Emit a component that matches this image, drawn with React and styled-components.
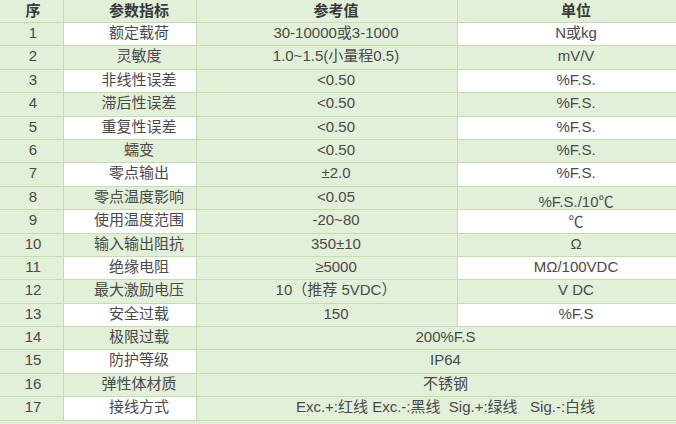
import React from "react"
import styled, { createGlobalStyle } from "styled-components"

const GlobalStyle = createGlobalStyle`
    html, body {
        margin: 0;
        padding: 0;
        background: #e2efd9;
    }
    body {
        font-family: "Liberation Sans", "Noto Sans CJK SC", sans-serif;
    }
`

const Sheet = styled.div`
    display: grid;
    width: 676px;
    grid-template-columns: 63px 132px 260px 218px;
    grid-template-rows: 22px repeat(17, 22.4px);
    gap: 1px;
    background: #c4dcb0;
    border-bottom: 1px solid #c4dcb0;
`

const Cell = styled.div`
    display: flex;
    justify-content: center;
    align-items: flex-start;
    grid-column: ${props => props.span ? `span ${props.span}` : "auto"};
    padding: ${props => 1 + (props.drop || 0)}px 0 0 ${props => props.first ? 3 : 18}px;
    background: ${props => props.light ? "#ffffff" : "#e2efd9"};
    color: #4a4a4a;
    font-size: 15px;
    line-height: 18px;
    white-space: pre;
    overflow: hidden;
`

const HeadCell = styled(Cell)`
    padding-top: 2px;
    font-weight: bold;
    color: #3a3a3a;
`

const rows = [
    ["1", "额定载荷", "30-10000或3-1000", "N或kg"],
    ["2", "灵敏度", "1.0~1.5(小量程0.5)", "mV/V"],
    ["3", "非线性误差", "<0.50", "%F.S."],
    ["4", "滞后性误差", "<0.50", "%F.S."],
    ["5", "重复性误差", "<0.50", "%F.S."],
    ["6", "蠕变", "<0.50", "%F.S."],
    ["7", "零点输出", "±2.0", "%F.S."],
    ["8", "零点温度影响", "<0.05", "%F.S./10℃", 5],
    ["9", "使用温度范围", "-20~80", "℃", 2],
    ["10", "输入输出阻抗", "350±10", "Ω"],
    ["11", "绝缘电阻", "≥5000", "MΩ/100VDC"],
    ["12", "最大激励电压", "10（推荐 5VDC）", "V DC"],
    ["13", "安全过载", "150", "%F.S"],
    ["14", "极限过载", "200%F.S"],
    ["15", "防护等级", "IP64"],
    ["16", "弹性体材质", "不锈钢"],
    ["17", "接线方式", "Exc.+:红线 Exc.-:黑线  Sig.+:绿线   Sig.-:白线"],
]

function App() {
    return (
        <>
            <GlobalStyle />
            <Sheet>
                <HeadCell first>序</HeadCell>
                <HeadCell>参数指标</HeadCell>
                <HeadCell>参考值</HeadCell>
                <HeadCell>单位</HeadCell>
                {rows.map((row, index) => {
                    const odd = index % 2 === 0
                    return (
                        <React.Fragment key={row[0]}>
                            <Cell first>{row[0]}</Cell>
                            <Cell light={odd}>{row[1]}</Cell>
                            {row.length > 3 ? (
                                <>
                                    <Cell>{row[2]}</Cell>
                                    <Cell light={odd} drop={row[4]}>{row[3]}</Cell>
                                </>
                            ) : (
                                <Cell span={2}>{row[2]}</Cell>
                            )}
                        </React.Fragment>
                    )
                })}
            </Sheet>
        </>
    )
}

export default App
